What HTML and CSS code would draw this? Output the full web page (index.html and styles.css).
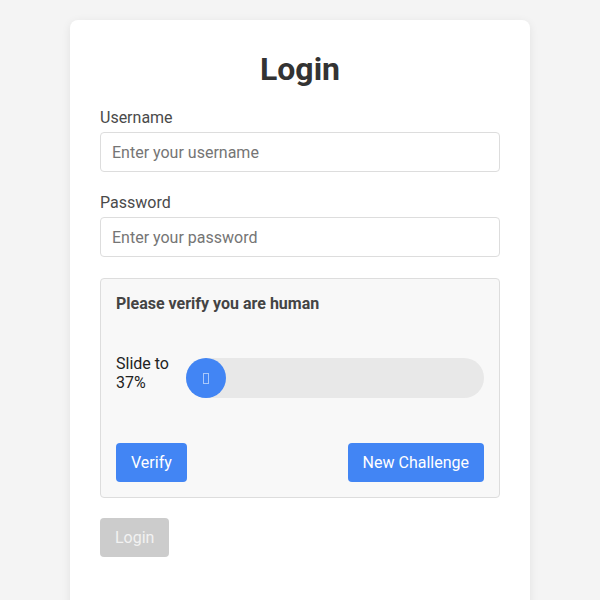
FILE: index.html
```html
<!DOCTYPE html>
<html>
<head>
<meta charset="utf-8">
<link rel="stylesheet" href="styles.css">
</head>
<body>
<div class="card">
  <h1 class="title">Login</h1>
  <div class="group">
    <label class="label">Username</label>
    <input class="input" type="text" placeholder="Enter your username">
  </div>
  <div class="group">
    <label class="label">Password</label>
    <input class="input" type="password" placeholder="Enter your password">
  </div>
  <div class="captcha">
    <div class="captcha-title">Please verify you are human</div>
    <div class="slider-row">
      <div class="slider-label">Slide to 37%</div>
      <div class="track">
        <div class="thumb"><span class="tofu"></span></div>
      </div>
    </div>
    <div class="actions">
      <button class="btn">Verify</button>
      <button class="btn">New Challenge</button>
    </div>
  </div>
  <button class="btn btn-disabled">Login</button>
</div>
</body>
</html>
```
FILE: styles.css
```css
html, body {
  margin: 0;
  padding: 0;
  background: #f4f4f4;
  font-family: Roboto, "Liberation Sans", sans-serif;
}
body {
  padding-top: 20px;
}
.card {
  width: 400px;
  margin: 0 auto;
  background: #fff;
  border-radius: 8px;
  box-shadow: 0 2px 10px rgba(0,0,0,0.08);
  padding: 30px 30px 60px;
}
.title {
  margin: 0 0 20px;
  text-align: center;
  font-size: 32px;
  font-weight: 700;
  color: #333;
  line-height: 38px;
}
.group {
  margin-bottom: 21px;
}
.label {
  display: block;
  font-size: 16px;
  line-height: 19px;
  color: #4a4a4a;
  margin-bottom: 5px;
}
.input {
  display: block;
  box-sizing: border-box;
  width: 100%;
  height: 40px;
  padding: 0 11px;
  border: 1px solid #ddd;
  border-radius: 4px;
  font-family: Roboto, "Liberation Sans", sans-serif;
  font-size: 16px;
  color: #333;
  outline: none;
}
.input::placeholder {
  color: #757575;
}
.captcha {
  background: #f8f8f8;
  border: 1px solid #ddd;
  border-radius: 4px;
  padding: 15px;
  margin-bottom: 20px;
}
.captcha-title {
  font-size: 16px;
  line-height: 19px;
  font-weight: 700;
  color: #444;
}
.slider-row {
  display: flex;
  align-items: flex-start;
  margin-top: 41px;
}
.slider-label {
  width: 60px;
  margin-right: 10px;
  font-size: 16px;
  line-height: 19px;
  color: #222;
}
.track {
  flex: 1;
  height: 40px;
  margin-top: 4px;
  border-radius: 20px;
  background: #e8e8e8;
  display: flex;
  align-items: center;
}
.thumb {
  width: 40px;
  height: 40px;
  border-radius: 50%;
  background: #4285f4;
  display: flex;
  align-items: center;
  justify-content: center;
}
.tofu {
  display: block;
  box-sizing: border-box;
  width: 6px;
  height: 11px;
  border: 1px solid rgba(255,255,255,0.55);
}
.actions {
  display: flex;
  justify-content: space-between;
  margin-top: 45px;
}
.btn {
  font-family: Roboto, "Liberation Sans", sans-serif;
  font-size: 16px;
  line-height: 19px;
  padding: 10px 15px;
  border: none;
  border-radius: 4px;
  background: #4285f4;
  color: #fff;
  cursor: pointer;
}
.btn-disabled {
  background: #ccc;
  color: #f2f2f2;
  display: block;
}
```
